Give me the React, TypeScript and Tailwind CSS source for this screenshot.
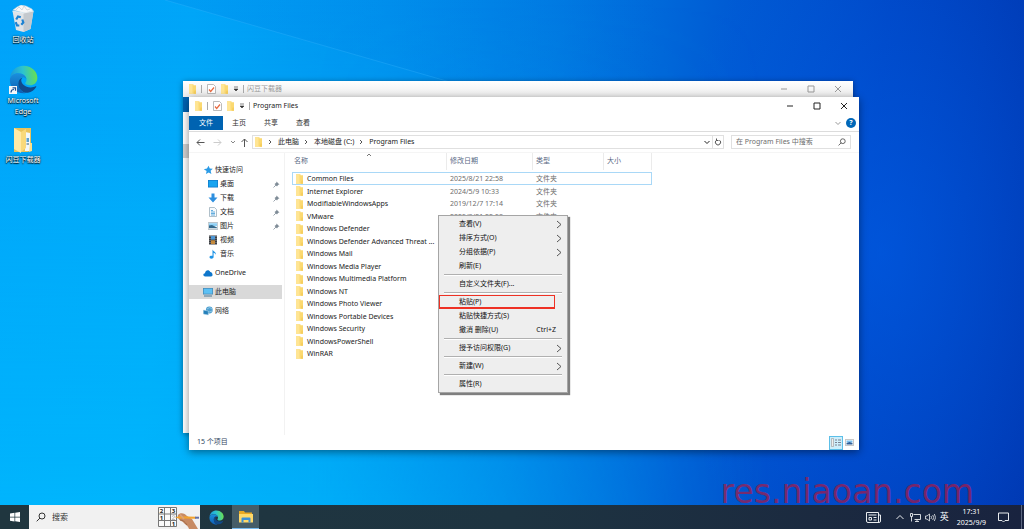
import { useState } from "react";
import type { ReactNode } from "react";

const folders = [
  { name: "Common Files", date: "2025/8/21 22:58" },
  { name: "Internet Explorer", date: "2024/5/9 10:33" },
  { name: "ModifiableWindowsApps", date: "2019/12/7 17:14" },
  { name: "VMware", date: "2025/8/21 22:58" },
  { name: "Windows Defender", date: "" },
  { name: "Windows Defender Advanced Threat ...", date: "" },
  { name: "Windows Mail", date: "" },
  { name: "Windows Media Player", date: "" },
  { name: "Windows Multimedia Platform", date: "" },
  { name: "Windows NT", date: "" },
  { name: "Windows Photo Viewer", date: "" },
  { name: "Windows Portable Devices", date: "" },
  { name: "Windows Security", date: "" },
  { name: "WindowsPowerShell", date: "" },
  { name: "WinRAR", date: "" },
];

const menuGroups = [
  [
    { label: "查看(V)", sub: true },
    { label: "排序方式(O)", sub: true },
    { label: "分组依据(P)", sub: true },
    { label: "刷新(E)" },
  ],
  [{ label: "自定义文件夹(F)..." }],
  [
    { label: "粘贴(P)", marked: true },
    { label: "粘贴快捷方式(S)" },
    { label: "撤消 删除(U)", shortcut: "Ctrl+Z" },
  ],
  [{ label: "授予访问权限(G)", sub: true }],
  [{ label: "新建(W)", sub: true }],
  [{ label: "属性(R)" }],
] as { label: string; sub?: boolean; marked?: boolean; shortcut?: string }[][];

function FolderIcon({ className = "w-[9px] h-[10px]" }: { className?: string }) {
  return (
    <svg viewBox="0 0 9 10" className={`shrink-0 ${className}`}>
      <path d="M1 .3h4.500v1H8v8.400H1z" fill="#fbd971" />
      <path d="M1 .3h3.500v9.400H1z" fill="#ffe594" />
      <path d="M6.500 6.500H8v3.200H5.500z" fill="#f6ce5e" />
    </svg>
  );
}

function EdgeIcon({ className }: { className: string }) {
  return (
    <svg viewBox="0 0 32 32" className={className}>
      <defs>
        <linearGradient id="edgeTop" x1="0" y1=".6" x2="1" y2=".5">
          <stop offset="0" stopColor="#1996dc" />
          <stop offset=".5" stopColor="#2cc3cf" />
          <stop offset="1" stopColor="#6be04e" />
        </linearGradient>
        <linearGradient id="edgeLow" x1="0" y1="0" x2="0" y2="1">
          <stop offset="0" stopColor="#1a90dd" />
          <stop offset="1" stopColor="#0f5db2" />
        </linearGradient>
      </defs>
      <path d="M1 15C1.500 6.500 8 .8 16 .8c9 0 15.300 6.500 15.300 13.200 0 5.500-4 8.300-8 8.300-3.600 0-5.400-1.200-5.400-2.200 0-.9 1.400-1.300 1.400-4 0-3.300-3.500-7-9-7C5.500 9 1.700 12 1 15z" fill="url(#edgeTop)" />
      <path d="M1 15.500C1.800 11.500 5.400 9 10.200 9c5 0 8.800 3.200 9 6.600-1-1.400-2.400-2-3.800-2-3 0-5.200 2.900-5.200 6.500 0 5.500 4.200 10.300 8.300 10.900C9 32.500.2 25.500 1 15.500z" fill="url(#edgeLow)" />
      <path d="M15.200 13.700c-3 .4-5 3-5 6.600 0 6 5 10.900 10.700 10.300 4-.5 7.300-3.300 9.100-6.200.5-.8-.2-1.200-.8-.9-1.200.7-3 1.200-5.300 1.200-6.300 0-10.400-4-10.400-7.800 0-1.400.7-2.500 1.700-3.200z" fill="#114a8b" />
    </svg>
  );
}

function RecycleBin() {
  return (
    <svg viewBox="0 0 24 28" className="h-7 w-6">
      <path d="M2 5l4-3 4-2 5 1 6 3 1 2-9 2z" fill="#f7f8f9" stroke="#c7ced4" strokeWidth=".5" />
      <path d="M5 5l3-3 3 3 2-4 3 4 3-1" fill="none" stroke="#c3c9ce" strokeWidth=".7" />
      <path d="M1.500 6l11 2 10-2-3 18-7 3-7.500-2z" fill="#dfe3e7" />
      <path d="M12.500 8l10-2-3 18-7 3z" fill="#c4c9ce" />
      <path d="M1.500 6l11 2 10-2" fill="none" stroke="#f5f6f7" strokeWidth=".8" />
      <g fill="none" stroke="#1d82d2" strokeWidth="2.200">
        <path d="M5.200 14.500l1.800-3 2.800.8" />
        <path d="M11.300 14.500l1 3-2 2.300" />
        <path d="M8.300 20.500H6l-1.300-3.300" />
      </g>
    </svg>
  );
}

function OpenFolder() {
  return (
    <svg viewBox="0 0 20 26" className="h-[26px] w-5">
      <path d="M1 1h17v22l-3 2H1z" fill="#e9c35c" />
      <path d="M12 5l5 1v18h-5z" fill="#f2f7fb" />
      <path d="M13.500 11h2.500v4h-2.500z" fill="#5ea2cf" />
      <path d="M13.500 16h2.500v2h-2.500z" fill="#93a9b5" />
      <path d="M1 1l7 4v21l-7-4z" fill="#ffe9a6" />
      <path d="M8 5l5-3v19l-5 4z" fill="#f9d97c" />
      <path d="M17 16h2v8l-3 1z" fill="#fbe08a" />
    </svg>
  );
}

function DesktopIcon({ label, children }: { label: ReactNode; children: ReactNode }) {
  return (
    <button className="flex w-[46px] flex-col items-center gap-px text-center text-[7px] leading-[11px] text-white [text-shadow:0_1px_1px_#000,0_0_2px_#000]">
      {children}
      <span className="whitespace-nowrap">{label}</span>
    </button>
  );
}

function TitleBar({ title, active = false }: { title: string; active?: boolean }) {
  const tone = active ? "text-[#222]" : "text-[#999]";
  return (
    <div className={`flex items-center pl-[5px] text-[7px] ${tone} ${active ? "h-[18px] bg-white" : "h-4 bg-linear-to-b from-white to-[#ececec]"}`}>
      <FolderIcon />
      <span className="mr-[5px] ml-1 h-2 w-px bg-[#aaa]" />
      <svg viewBox="0 0 9 10" className="h-[10px] w-[9px]">
        <path d="M.5.5h6l2 2v7h-8z" fill="#fff" stroke="#aaa" strokeWidth=".8" />
        <path d="M2 5.500l1.700 2L7 3.500" fill="none" stroke="#e86a41" strokeWidth="1.200" />
      </svg>
      <FolderIcon className="ml-1 h-[10px] w-[9px]" />
      <svg viewBox="0 0 6 6" className="ml-1 h-1.5 w-1.5">
        <path d="M1 1h4M1 3h4L3 5z" fill="#333" stroke="#333" strokeWidth=".6" />
      </svg>
      <span className="mr-[3px] ml-1 h-2 w-px bg-[#aaa]" />
      <h2>{title}</h2>
      <div className="ml-auto flex self-stretch pr-0.5">
        {["M1 4h6", "M1 1h6v6H1z", "M1 1l6 6M7 1L1 7"].map((d, i) => (
          <button key={d} aria-label={["最小化", "最大化", "关闭"][i]} className="flex w-[27px] items-center justify-center">
            <svg viewBox="0 0 8 8" className="h-2 w-2">
              <path d={d} fill="none" stroke="currentColor" />
            </svg>
          </button>
        ))}
      </div>
    </div>
  );
}

function Chevron({ d, className = "" }: { d: string; className?: string }) {
  return (
    <svg viewBox="0 0 6 6" className={`h-1.5 w-1.5 shrink-0 ${className}`}>
      <path d={d} fill="none" stroke="currentColor" />
    </svg>
  );
}

function SearchIcon({ className }: { className: string }) {
  return (
    <svg viewBox="0 0 10 10" className={`shrink-0 ${className}`}>
      <circle cx="6" cy="4" r="3" fill="none" stroke="currentColor" />
      <path d="M4 6L.7 9.300" stroke="currentColor" />
    </svg>
  );
}

const navIcons: Record<string, ReactNode> = {
  star: <path d="M5.500.8l1.300 2.700 3 .2-2.200 2 .8 3.300-2.700-1.600L3 9l.6-2.900L.8 4.200l3.200-.6z" fill="#2b9be6" />,
  desktop: (
    <>
      <path d="M0 1h10v7.500H0z" fill="#1079c8" />
      <path d="M.7 1.700h8.600v6H.7z" fill="#18a4f0" />
    </>
  ),
  down: <path d="M3.500.5h3v4h3L5 9.500.5 4.500h3z" fill="#2d8fdf" />,
  doc: (
    <>
      <path d="M1.500.5h5l2 2v7h-7z" fill="#f8fbfd" stroke="#8fa5b3" strokeWidth=".7" />
      <path d="M3 3.500h2M3 5h4M3 6.500h4M3 8h4" stroke="#3d9bd6" strokeWidth=".8" />
    </>
  ),
  picture: (
    <>
      <path d="M.3 1.500h9.400v7H.3z" fill="#fff" stroke="#8a9aa6" strokeWidth=".6" />
      <path d="M1 2.200h8v3H1z" fill="#8fd0f5" />
      <path d="M1 4.500l3-.5 5 2.500v.8H1z" fill="#34698c" />
    </>
  ),
  video: (
    <>
      <path d="M1 .5h8v9H1z" fill="#3a3d42" />
      <path d="M3 1h4v3.600H3z" fill="#4d97d6" />
      <path d="M3 5.300h4V9H3z" fill="#c58a3c" />
      <path d="M2 1v8M8 1v8" stroke="#ddd" strokeWidth=".6" strokeDasharray="1 1" />
    </>
  ),
  music: <path d="M4.500.3c.3 2 3.800 2.500 3.300 5.500-.4-1.200-1.200-1.800-2.200-2V8c0 1-1 1.700-2.200 1.700S1.500 9 1.500 8s1.500-1.600 3-1.200z" fill="#1e93e6" />,
  cloud: <path d="M2.300 8.500C-.2 8.500-.3 5.500 2 5.200 2.300 2 6 1.200 7.300 4 9.600 3.900 10.600 8.500 8 8.500z" fill="#0f76cb" />,
  pc: (
    <>
      <path d="M0 1h10v6.500H0z" fill="#4689b5" />
      <path d="M.7 1.700h8.600v5H.7z" fill="#5cc0f4" />
      <path d="M1 9h8" stroke="#4a7896" />
    </>
  ),
  network: (
    <>
      <circle cx="6.300" cy="4" r="3.400" fill="#4e9fd0" />
      <path d="M4 3q3-3 5 0M3.200 5q3 2 6 0" stroke="#b5dff2" fill="none" strokeWidth=".6" />
      <path d="M.3 4l5 1v4l-5-1z" fill="#2580ba" stroke="#b9d9ea" strokeWidth=".5" />
    </>
  ),
};

function NavItem({ icon, label, pinned, child, selected }: { icon: string; label: string; pinned?: boolean; child?: boolean; selected?: boolean }) {
  return (
    <li>
      <button className={`flex h-[14px] w-full items-center pr-0.5 ${child ? "gap-0.5 pl-[19px]" : "gap-0.5 pl-[14px]"} ${selected ? "bg-[#d9d9d9]" : ""}`}>
        <svg viewBox="0 0 10 10" className="h-[10px] w-[10px] shrink-0">{navIcons[icon]}</svg>
        {label}
        {pinned && (
          <svg viewBox="0 0 7 7" className="ml-auto h-[7px] w-[7px]">
            <path d="M3.500.5l3 3-1.300.2-1.200 1.800-2.500-2.500 1.800-1.200z" fill="#7f8c97" />
            <path d="M3 4L.5 6.500" stroke="#7f8c97" strokeWidth=".8" />
          </svg>
        )}
      </button>
    </li>
  );
}

function NavPane() {
  return (
    <nav className="flex w-[96px] shrink-0 flex-col gap-[5px] border-r border-[#f2f2f2] pt-[10px] pr-0.5">
      <ul>
        <NavItem icon="star" label="快速访问" />
        <NavItem icon="desktop" label="桌面" child pinned />
        <NavItem icon="down" label="下载" child pinned />
        <NavItem icon="doc" label="文档" child pinned />
        <NavItem icon="picture" label="图片" child pinned />
        <NavItem icon="video" label="视频" child />
        <NavItem icon="music" label="音乐" child />
      </ul>
      <ul><NavItem icon="cloud" label="OneDrive" /></ul>
      <ul><NavItem icon="pc" label="此电脑" selected /></ul>
      <ul><NavItem icon="network" label="网络" /></ul>
    </nav>
  );
}

function FileTable({ selected, onSelect }: { selected: number; onSelect: (i: number) => void }) {
  return (
    <table className="w-[360px] table-fixed border-collapse text-left">
      <thead>
        <tr className="h-[19px] align-top text-[#5a6a85]">
          {["名称", "修改日期", "类型", "大小"].map((h, i) => (
            <th key={h} className={`relative p-0 font-normal ${["w-[155px]", "w-[86px]", "w-[71px]", "w-12"][i]}`}>
              <div className={`flex h-[17px] items-center border-r border-[#ebebeb] ${i === 0 ? "pl-0.5" : "pl-[3px]"}`}>{h}</div>
              {i === 0 && <Chevron d="M1 4l2-2 2 2" className="absolute -top-px left-[74px] text-[#777]" />}
            </th>
          ))}
        </tr>
      </thead>
      <tbody>
        {folders.map((f, i) => (
          <tr key={f.name} onClick={() => onSelect(i)}
            className={`odd:h-[13px] even:h-3 ${selected === i ? "outline -outline-offset-1 outline-[#a9d8f7]" : ""}`}>
            <td className="p-0 pl-[3px]">
              <span className="flex items-center gap-[3px] leading-[11px] whitespace-nowrap text-[#222]">
                <FolderIcon />
                {f.name}
              </span>
            </td>
            <td className="p-0 pl-[3px] leading-[11px] text-[#6d6d6d]">{f.date}</td>
            <td className="p-0 pl-[3px] leading-[11px] text-[#6d6d6d]">{f.date && "文件夹"}</td>
            <td className="p-0" />
          </tr>
        ))}
      </tbody>
    </table>
  );
}

function ExplorerWindow() {
  const [selected, setSelected] = useState(0);
  return (
    <section className="absolute top-[97px] right-[165px] bottom-[55px] left-[189px] flex flex-col bg-white text-[7px] text-[#222] shadow-[0_2px_8px_rgba(0,0,0,0.45)]">
      <TitleBar title="Program Files" active />
      <div className="flex h-[17px] items-center border-b border-[#dcdcdc] pr-[3px] text-[#333]">
        <button className="h-[14px] w-[34px] bg-[#0063b1] text-white">文件</button>
        <button className="w-8">主页</button>
        <button className="w-8">共享</button>
        <button className="w-8">查看</button>
        <Chevron d="M.5 2l2.500 2.500L5.500 2" className="ml-auto text-[#999]" />
        <button aria-label="帮助" className="ml-[5px] flex h-[10px] w-[10px] items-center justify-center rounded-full bg-[#0067b8] font-bold text-white">?</button>
      </div>

      <div className="flex items-center border-b border-[#f5f5f5] py-[3px] pr-2 pl-[7px]">
        <button aria-label="后退" className="mr-2 text-[#555]">
          <svg viewBox="0 0 9 9" className="h-[9px] w-[9px]"><path d="M8.500 4.500H1M4 1.500l-3 3 3 3" fill="none" stroke="currentColor" /></svg>
        </button>
        <button aria-label="前进" className="mr-2 text-[#ccc]">
          <svg viewBox="0 0 9 9" className="h-[9px] w-[9px]"><path d="M.5 4.500H8M5 1.500l3 3-3 3" fill="none" stroke="currentColor" /></svg>
        </button>
        <Chevron d="M1 2l2 2 2-2" className="mr-1 text-[#888]" />
        <button aria-label="向上" className="mr-[3px] text-[#555]">
          <svg viewBox="0 0 9 9" className="h-[9px] w-[9px]"><path d="M4.500 9V1M1.500 4l3-3 3 3" fill="none" stroke="currentColor" /></svg>
        </button>
        <div className="flex h-[14px] flex-1 items-center border border-[#e0e0e0] pl-px">
          <FolderIcon />
          {["此电脑", "本地磁盘 (C:)", "Program Files"].map((c) => (
            <span key={c} className="flex items-center">
              <Chevron d="M2 1l2 2-2 2" className="mr-[5px] ml-1 text-[#555]" />
              <button>{c}</button>
            </span>
          ))}
          <Chevron d="M.5 2l2.500 2.500L5.500 2" className="mr-0.5 ml-auto" />
          <button aria-label="刷新" className="flex h-3 items-center border-l border-[#e0e0e0] px-px">
            <svg viewBox="0 0 8 8" className="h-2 w-2"><path d="M5.500 2.200a2.600 2.600 0 1 1-3 0M2.500.5v2h2" fill="none" stroke="#444" strokeWidth=".9" /></svg>
          </button>
        </div>
        <label className="ml-[7px] flex h-[14px] w-[120px] items-center border border-[#e0e0e0] px-1 text-[#444]">
          <input aria-label="搜索" placeholder="在 Program Files 中搜索" className="w-0 flex-1 outline-none placeholder:text-[#6d6d6d]" />
          <SearchIcon className="h-2 w-2" />
        </label>
      </div>

      <div className="flex min-h-0 flex-1">
        <NavPane />
        <div className="pl-[7px]">
          <FileTable selected={selected} onSelect={setSelected} />
        </div>
      </div>

      <footer className="flex h-[15px] items-center pr-[5px] pl-2 text-[#33475f]">
        <span>15 个项目</span>
        <button aria-label="详细信息" className="ml-auto flex h-[14px] w-[14px] items-center justify-center border border-[#5cbfe8] bg-[#cdeefb]">
          <svg viewBox="0 0 10 9" className="h-[9px] w-[10px]">
            <path d="M.5.5h2v8h-2z" fill="#eee" stroke="#999" strokeWidth=".6" />
            <path d="M4 2h2M7 2h3M4 4.500h2M7 4.500h3M4 7h2M7 7h3" stroke="#667" strokeWidth=".8" />
          </svg>
        </button>
        <button aria-label="大图标" className="ml-0.5">
          <svg viewBox="0 0 9 7" className="h-[7px] w-[9px]">
            <path d="M.4.4h8.200v6.200H.4z" fill="#fff" stroke="#999" strokeWidth=".6" />
            <path d="M1.500 1.500h6v2h-6z" fill="#7cc0ef" />
            <path d="M1.500 4l3-1 3 1v1.500h-6z" fill="#2f5f99" />
          </svg>
        </button>
      </footer>
    </section>
  );
}

function ContextMenu() {
  return (
    <div role="menu" className="absolute top-[215px] left-[438px] w-[130px] border border-[#a5a5a5] bg-[#eee] py-px text-[7px] text-[#111] shadow-[2px_2px_1px_rgba(0,0,0,0.5)]">
      {menuGroups.map((group, g) => (
        <div key={g}>
          {g > 0 && <hr className="mx-[5px] my-px h-0.5 border-0 border-b border-b-white bg-[#b0b0b0]" />}
          {group.map((item) => (
            <button key={item.label} role="menuitem" className="relative flex h-[14px] w-full items-center justify-between pr-[5px] pl-5">
              {item.marked && <span className="absolute inset-y-0 right-3 left-0 border border-b-2 border-[#ee3124]" />}
              {item.label}
              {item.shortcut && <span className="pr-1.5">{item.shortcut}</span>}
              {item.sub && (
                <svg viewBox="0 0 6 9" className="h-[9px] w-1.5"><path d="M1 1l4 3.500L1 8" fill="none" stroke="#444" strokeWidth=".9" /></svg>
              )}
            </button>
          ))}
        </div>
      ))}
    </div>
  );
}

function Taskbar() {
  return (
    <footer className="relative flex h-6 items-stretch bg-linear-to-r from-[#20363f] via-[#1e3441] to-[#19233f] text-white">
      <button aria-label="开始" className="flex w-[29px] items-center justify-center">
        <svg viewBox="0 0 10 10" className="h-[10px] w-[10px]">
          <path d="M0 1.400l4.500-.6v4H0zM5.200.7L10 0v4.800H5.200zM0 5.400h4.500v4L0 8.800zM5.200 5.400H10V10l-4.800-.7z" fill="#fff" />
        </svg>
      </button>
      <label className="flex w-[171px] items-center bg-[#f1f1f1] pl-[7px] text-[8px] text-[#333]">
        <SearchIcon className="h-[10px] w-[10px]" />
        <input aria-label="搜索" placeholder="搜索" className="ml-1.5 w-0 flex-1 outline-none placeholder:text-[#333]" />
        <svg viewBox="0 0 42 24" className="h-6 w-[42px]">
          <path d="M.5 2.500h18v19H.5zM6.500 2.500v19M12.500 2.500v19M.5 9h18M.5 15.500h18" fill="#fafafa" stroke="#777" />
          <g fill="#222" fontSize="6" fontWeight="700">
            <text x="1.800" y="8">2</text>
            <text x="13.800" y="8">3</text>
            <text x="1.800" y="14.500">1</text>
            <text x="13.800" y="21">1</text>
          </g>
          <path d="M14 11.500q2-2 3 0l-3 3h3" stroke="#aaa" fill="none" strokeWidth=".8" />
          <path d="M20 10c2-3 7-2 9 1l5 3 6 10h-9c-1-4-4-4-6-7-2-1-6-3-5-7z" fill="#c78a63" />
          <path d="M22 15c3 0 5 2 7 5" stroke="#95603f" fill="none" strokeWidth=".8" />
          <path d="M17 12.500l4-1.200 17 .4v2l-17-.3z" fill="#f3a32e" />
          <path d="M37 11.700h4v2h-4z" fill="#6170a8" />
          <path d="M22 9.500l4 4.500" stroke="#dba17a" strokeWidth="1.800" />
        </svg>
      </label>
      <button aria-label="Microsoft Edge" className="flex w-8 items-center justify-center">
        <EdgeIcon className="h-[15px] w-[15px]" />
      </button>
      <button aria-label="文件资源管理器" className="flex w-[27px] items-center justify-center border-b border-[#76b9ed] bg-[#455d68]">
        <svg viewBox="0 0 14 12" className="h-3 w-[14px]">
          <path d="M0 0h5l1 1.500h7V11H0z" fill="#e9a924" />
          <path d="M0 3h14v8.500H0z" fill="#ffd969" />
          <path d="M2.500 11.500V7.500q0-1 1-1h7q1 0 1 1v4H9.500V9h-5v2.500z" fill="#3b8fd6" />
        </svg>
      </button>

      <div className="ml-auto flex items-center pr-[15px]">
        <button aria-label="资讯" className="mr-[15px]">
          <svg viewBox="0 0 15 11" className="h-[11px] w-[15px]" fill="none" stroke="#e8ebee">
            <path d="M.5.500h12v10H2q-1.500 0-1.500-1.500zM12.500 3h2v6q0 1.500-1.500 1.500h-1M2.500 3h8M7.500 5.500h3M7.500 8h3" />
            <path d="M3 5.500h2.500V8H3z" />
          </svg>
        </button>
        <button aria-label="显示隐藏的图标" className="mr-1.5">
          <svg viewBox="0 0 8 6" className="h-1.5 w-2"><path d="M.5 5L4 1.500 7.500 5" fill="none" stroke="#e8ebee" /></svg>
        </button>
        <svg viewBox="0 0 11 9" className="mr-1 h-[9px] w-[11px]" fill="none" stroke="#e8ebee" strokeWidth=".9">
          <path d="M3.500 1.500h7v5h-6M7 6.500v2M5 8.500h4M.5.500h2v3h-2zM1.500 3.500v5" />
        </svg>
        <svg viewBox="0 0 11 9" className="mr-1 h-[9px] w-[11px]" fill="none" stroke="#e8ebee" strokeWidth=".8">
          <path d="M.5 3h1.500L4.500 1v7L2 6H.5zM6 3q1 1.500 0 3M7.700 2q2 2.500 0 5M9.300 1q2.600 3.500 0 7" />
        </svg>
        <button className="mr-2 text-[9px]">英</button>
        <time className="mr-3 text-center text-[7px] leading-[11px]">17:31<br />2025/9/9</time>
        <button aria-label="通知">
          <svg viewBox="0 0 11 11" className="h-[11px] w-[11px]"><path d="M.5 1h10v7.500H7L5.500 10 4 8.500H.5z" fill="none" stroke="#e8ebee" /></svg>
        </button>
      </div>
      <span className="absolute inset-y-0 right-0.5 w-px bg-[#5c6780]" />
    </footer>
  );
}

export default function App() {
  return (
    <div className="flex min-h-screen flex-col overflow-hidden font-['Noto_Sans','Noto_Sans_CJK_SC',sans-serif]">
      <main className="relative flex-1 bg-[radial-gradient(ellipse_22%_70%_at_86%_50%,rgba(0,100,240,0.5),transparent),linear-gradient(97deg,#00a2fa_0%,#00a5f8_18%,#0092ee_36%,#007ae2_52%,#005ad3_68%,#0046c4_82%,#0038b2_100%)]">
        {/* wallpaper light */}
        <svg viewBox="0 0 1024 505" preserveAspectRatio="none" className="absolute inset-0 h-full w-full">
          <defs>
            <linearGradient id="glow" x1="0" y1="0" x2="0" y2="1">
              <stop offset="0" stopColor="#00c0ff" stopOpacity="0" />
              <stop offset="1" stopColor="#00c0ff" stopOpacity=".6" />
            </linearGradient>
            <linearGradient id="fade" x1="0" y1="0" x2="1" y2="0">
              <stop offset="0" stopColor="#fff" />
              <stop offset=".3" stopColor="#fff" />
              <stop offset=".75" stopColor="#000" />
            </linearGradient>
            <linearGradient id="shade" x1="0" y1="0" x2="1" y2="0">
              <stop offset="0" stopColor="#0058d0" stopOpacity=".12" />
              <stop offset=".6" stopColor="#0058d0" stopOpacity="0" />
            </linearGradient>
            <mask id="left"><path d="M0 0h1024v505H0z" fill="url(#fade)" /></mask>
          </defs>
          <path d="M0 0h1024v505H0z" fill="url(#glow)" mask="url(#left)" />
          <path d="M165 0L460 85 1024 400V0z" fill="url(#shade)" />
          <path d="M165 0L450 82" stroke="#3bb8ff" strokeWidth="1" opacity=".3" />
        </svg>

        <div className="relative flex w-[46px] flex-col pt-[5px]">
          <DesktopIcon label="回收站"><RecycleBin /></DesktopIcon>
          <div className="pt-5">
            <DesktopIcon label={<>Microsoft<br />Edge</>}>
              <span className="relative block">
                <EdgeIcon className="h-[29px] w-[29px]" />
                <svg viewBox="0 0 8 8" className="absolute bottom-0 left-0 h-2 w-2">
                  <path d="M0 0h8v8H0z" fill="#f5f7fa" />
                  <path d="M2 6.500c0-2 1-3 3-3M3.500 1.800h3v3" fill="none" stroke="#1c4f93" strokeWidth="1.200" />
                </svg>
              </span>
            </DesktopIcon>
          </div>
          <div className="pt-[10px]">
            <DesktopIcon label="闪豆下载器"><OpenFolder /></DesktopIcon>
          </div>
        </div>

        <section className="absolute top-[81px] right-[171px] bottom-[72px] left-[183px] bg-white shadow-[0_1px_6px_rgba(0,0,0,0.4)]">
          <TitleBar title="闪豆下载器" />
          <div className="h-[15px] w-[34px] bg-[#0063b1]" />
          <div className="mt-8 h-[14px] w-[93px] bg-[#d0d0d0]" />
        </section>
        <ExplorerWindow />
        <ContextMenu />

        <p className="absolute right-[50px] bottom-px font-['DejaVu_Sans',sans-serif] text-[33px] leading-6 text-[#c8102e]/60">
          res.niaoan.com
        </p>
      </main>
      <Taskbar />
    </div>
  );
}
